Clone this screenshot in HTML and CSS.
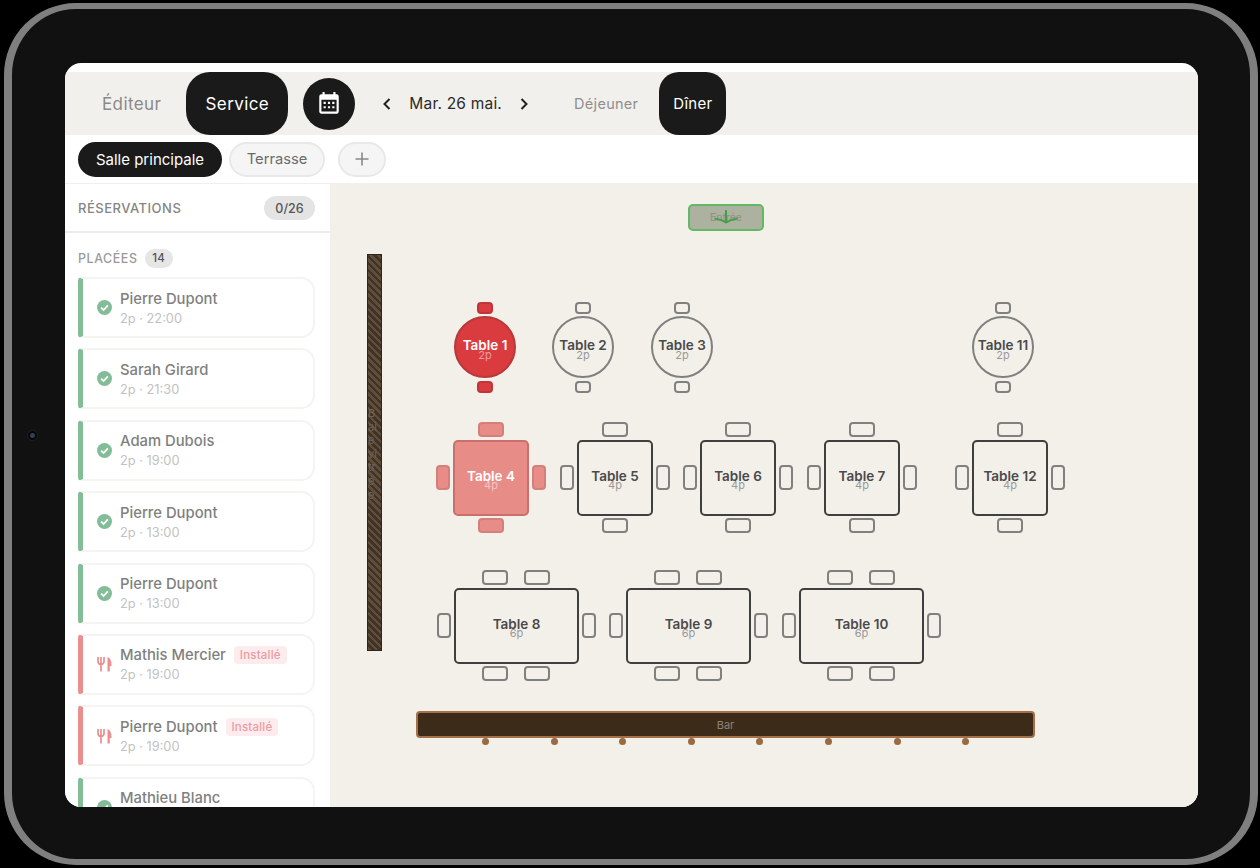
FILE: index.html
```html
<!DOCTYPE html>
<html lang="fr">
<head>
  <meta charset="UTF-8">
  <title>Service - Plan de salle</title>
  <link rel="stylesheet" href="styles.css">
</head>
<body>
  <div class="device">
    <span class="camera"></span>
    <div class="screen">
      <header class="toolbar">
        <div class="mode">Éditeur</div>
        <div class="mode active">Service</div>
        <div class="cal-btn">
          <svg viewBox="0 0 24 24" width="26" height="26"><path fill="#fff" d="M9,10V12H7V10H9M13,10V12H11V10H13M17,10V12H15V10H17M19,3A2,2 0 0,1 21,5V19A2,2 0 0,1 19,21H5C3.89,21 3,20.1 3,19V5A2,2 0 0,1 5,3H6V1H8V3H16V1H18V3H19M19,19V8H5V19H19M9,14V16H7V14H9M13,14V16H11V14H13M17,14V16H15V14H17Z"/></svg>
        </div>
        <div class="date-nav">
          <svg class="chev" viewBox="0 0 10 14" width="10" height="14"><path d="M7.5 2 L2.5 7 L7.5 12"/></svg>
          <span class="date">Mar. 26 mai.</span>
          <svg class="chev" viewBox="0 0 10 14" width="10" height="14"><path d="M2.5 2 L7.5 7 L2.5 12"/></svg>
        </div>
        <div class="meal">Déjeuner</div>
        <div class="meal active">Dîner</div>
      </header>

      <nav class="tabs">
        <div class="tab active">Salle principale</div>
        <div class="tab">Terrasse</div>
        <div class="tab add">
          <svg viewBox="0 0 16 16" width="16" height="16"><path d="M8 1.5V14.5M1.5 8H14.5"/></svg>
        </div>
      </nav>

      <div class="main">
        <aside class="sidebar">
          <div class="side-head">
            <span class="side-title">RÉSERVATIONS</span>
            <span class="count">0/26</span>
          </div>
          <div class="side-body">
            <div class="group-title">PLACÉES <span class="group-count">14</span></div>

            <div class="card placed">
              <svg class="state" viewBox="0 0 16 16" width="15" height="15"><circle cx="8" cy="8" r="8" fill="#82bd97"/><path d="M4.4 8.200 L7 10.700 L11.600 5.800" fill="none" stroke="#fff" stroke-width="2"/></svg>
              <div class="info"><div class="guest">Pierre Dupont</div><div class="when">2p · 22:00</div></div>
            </div>
            <div class="card placed">
              <svg class="state" viewBox="0 0 16 16" width="15" height="15"><circle cx="8" cy="8" r="8" fill="#82bd97"/><path d="M4.4 8.200 L7 10.700 L11.600 5.800" fill="none" stroke="#fff" stroke-width="2"/></svg>
              <div class="info"><div class="guest">Sarah Girard</div><div class="when">2p · 21:30</div></div>
            </div>
            <div class="card placed">
              <svg class="state" viewBox="0 0 16 16" width="15" height="15"><circle cx="8" cy="8" r="8" fill="#82bd97"/><path d="M4.4 8.200 L7 10.700 L11.600 5.800" fill="none" stroke="#fff" stroke-width="2"/></svg>
              <div class="info"><div class="guest">Adam Dubois</div><div class="when">2p · 19:00</div></div>
            </div>
            <div class="card placed">
              <svg class="state" viewBox="0 0 16 16" width="15" height="15"><circle cx="8" cy="8" r="8" fill="#82bd97"/><path d="M4.4 8.200 L7 10.700 L11.600 5.800" fill="none" stroke="#fff" stroke-width="2"/></svg>
              <div class="info"><div class="guest">Pierre Dupont</div><div class="when">2p · 13:00</div></div>
            </div>
            <div class="card placed">
              <svg class="state" viewBox="0 0 16 16" width="15" height="15"><circle cx="8" cy="8" r="8" fill="#82bd97"/><path d="M4.4 8.200 L7 10.700 L11.600 5.800" fill="none" stroke="#fff" stroke-width="2"/></svg>
              <div class="info"><div class="guest">Pierre Dupont</div><div class="when">2p · 13:00</div></div>
            </div>
            <div class="card seated">
              <svg class="state" viewBox="0 0 15 16" width="15" height="16"><path class="fork" d="M1 1V5.500C1 7.200 2.200 8.300 4 8.300S7 7.200 7 5.500V1M4 1V15.500"/><path fill="#ea8f90" d="M10.500 1C13 1.800 14.500 4.200 14.500 8.500V10H12.800V15.500H10.500Z"/></svg>
              <div class="info"><div class="guest">Mathis Mercier <span class="badge">Installé</span></div><div class="when">2p · 19:00</div></div>
            </div>
            <div class="card seated">
              <svg class="state" viewBox="0 0 15 16" width="15" height="16"><path class="fork" d="M1 1V5.500C1 7.200 2.200 8.300 4 8.300S7 7.200 7 5.500V1M4 1V15.500"/><path fill="#ea8f90" d="M10.500 1C13 1.800 14.500 4.200 14.500 8.500V10H12.800V15.500H10.500Z"/></svg>
              <div class="info"><div class="guest">Pierre Dupont <span class="badge">Installé</span></div><div class="when">2p · 19:00</div></div>
            </div>
            <div class="card placed">
              <svg class="state" viewBox="0 0 16 16" width="15" height="15"><circle cx="8" cy="8" r="8" fill="#82bd97"/><path d="M4.4 8.200 L7 10.700 L11.600 5.800" fill="none" stroke="#fff" stroke-width="2"/></svg>
              <div class="info"><div class="guest">Mathieu Blanc</div><div class="when">2p · 20:00</div></div>
            </div>
          </div>
        </aside>

        <section class="floor">
          <div class="entry">
            <span class="entry-label">Entrée</span>
            <svg class="entry-arrow" viewBox="0 0 26 15" width="26" height="15"><path d="M13 1V13M1.500 9.500C6 10 10 11.500 13 13.500C16 11.500 20 10 24.500 9.500"/></svg>
          </div>

          <div class="window">B<br>ai<br>e<br>vi<br>tr<br>é<br>e</div>

          <div class="table round busy t1">
            <i class="chair small c-top"></i><i class="chair small c-bottom"></i>
            <b class="name">Table 1</b><span class="size">2p</span>
          </div>
          <div class="table round t2">
            <i class="chair small c-top"></i><i class="chair small c-bottom"></i>
            <b class="name">Table 2</b><span class="size">2p</span>
          </div>
          <div class="table round t3">
            <i class="chair small c-top"></i><i class="chair small c-bottom"></i>
            <b class="name">Table 3</b><span class="size">2p</span>
          </div>
          <div class="table round t11">
            <i class="chair small c-top"></i><i class="chair small c-bottom"></i>
            <b class="name">Table 11</b><span class="size">2p</span>
          </div>

          <div class="table square soft t4">
            <i class="chair c-top"></i><i class="chair c-bottom"></i><i class="chair side c-left"></i><i class="chair side c-right"></i>
            <b class="name">Table 4</b><span class="size">4p</span>
          </div>
          <div class="table square t5">
            <i class="chair c-top"></i><i class="chair c-bottom"></i><i class="chair side c-left"></i><i class="chair side c-right"></i>
            <b class="name">Table 5</b><span class="size">4p</span>
          </div>
          <div class="table square t6">
            <i class="chair c-top"></i><i class="chair c-bottom"></i><i class="chair side c-left"></i><i class="chair side c-right"></i>
            <b class="name">Table 6</b><span class="size">4p</span>
          </div>
          <div class="table square t7">
            <i class="chair c-top"></i><i class="chair c-bottom"></i><i class="chair side c-left"></i><i class="chair side c-right"></i>
            <b class="name">Table 7</b><span class="size">4p</span>
          </div>
          <div class="table square t12">
            <i class="chair c-top"></i><i class="chair c-bottom"></i><i class="chair side c-left"></i><i class="chair side c-right"></i>
            <b class="name">Table 12</b><span class="size">4p</span>
          </div>

          <div class="table long t8">
            <i class="chair c-top c-a"></i><i class="chair c-top c-b"></i><i class="chair c-bottom c-a"></i><i class="chair c-bottom c-b"></i><i class="chair side c-left"></i><i class="chair side c-right"></i>
            <b class="name">Table 8</b><span class="size">6p</span>
          </div>
          <div class="table long t9">
            <i class="chair c-top c-a"></i><i class="chair c-top c-b"></i><i class="chair c-bottom c-a"></i><i class="chair c-bottom c-b"></i><i class="chair side c-left"></i><i class="chair side c-right"></i>
            <b class="name">Table 9</b><span class="size">6p</span>
          </div>
          <div class="table long t10">
            <i class="chair c-top c-a"></i><i class="chair c-top c-b"></i><i class="chair c-bottom c-a"></i><i class="chair c-bottom c-b"></i><i class="chair side c-left"></i><i class="chair side c-right"></i>
            <b class="name">Table 10</b><span class="size">6p</span>
          </div>

          <div class="bar">Bar</div>
          <div class="stools">
            <i class="stool"></i><i class="stool"></i><i class="stool"></i><i class="stool"></i>
            <i class="stool"></i><i class="stool"></i><i class="stool"></i><i class="stool"></i>
          </div>
        </section>
      </div>
    </div>
  </div>
</body>
</html>
```

FILE: styles.css
```css
* {
  box-sizing: border-box;
}
html, body {
  margin: 0;
  padding: 0;
  height: 100%;
  background: #000;
  overflow: hidden;
}
body {
  font-family: Inter, "Liberation Sans", sans-serif;
  padding: 3px 2px 3px 4px;
}

/* tablet frame */
.device {
  position: relative;
  height: 862px;
  border-style: solid;
  border-width: 6px 8px;
  border-color: #7f7f7f;
  border-radius: 72px;
  background: #111;
  padding: 54px 52px 52px 53px;
}
.camera {
  position: absolute;
  left: 15px;
  top: 421px;
  width: 11px;
  height: 11px;
  border-radius: 50%;
  background: radial-gradient(circle, #33414f 0 2px, #05060a 3px);
  border: 1px solid #1d1f24;
}
.screen {
  height: 100%;
  border-radius: 16px;
  overflow: hidden;
  background: #fff;
  padding-top: 9px;
  display: flex;
  flex-direction: column;
}

/* top bar */
.toolbar {
  height: 63px;
  background: #f2f0ec;
  display: flex;
  align-items: center;
  padding-left: 37px;
  flex-shrink: 0;
}
.mode {
  font-size: 17px;
  color: #8a8a8a;
  letter-spacing: 0.4px;
}
.mode.active {
  height: 63px;
  width: 102px;
  margin-left: 25px;
  border-radius: 24px;
  background: #1a1a1a;
  color: #fff;
  display: flex;
  align-items: center;
  justify-content: center;
}
.cal-btn {
  width: 52px;
  height: 52px;
  margin-left: 15px;
  border-radius: 50%;
  background: #1a1a1a;
  display: flex;
  align-items: center;
  justify-content: center;
}
.date-nav {
  display: flex;
  align-items: center;
  margin-left: 27px;
  gap: 17px;
}
.chev path {
  fill: none;
  stroke: #222;
  stroke-width: 2;
}
.date {
  font-size: 15.5px;
  color: #2b2b2b;
  letter-spacing: 0.2px;
}
.meal {
  font-size: 14.5px;
  color: #8f8f8f;
  margin-left: 45px;
  letter-spacing: 0.3px;
}
.meal.active {
  height: 63px;
  width: 67px;
  margin-left: 21px;
  border-radius: 20px;
  background: #1a1a1a;
  color: #fff;
  font-size: 15px;
  display: flex;
  align-items: center;
  justify-content: center;
}

/* room tabs */
.tabs {
  height: 48px;
  flex-shrink: 0;
  display: flex;
  align-items: center;
  gap: 7px;
  padding: 0 0 0 13px;
}
.tab {
  height: 35px;
  width: 96px;
  border-radius: 18px;
  background: #f5f5f5;
  border: 2px solid #e8e8e8;
  color: #6b6b6b;
  font-size: 14.7px;
  display: flex;
  align-items: center;
  justify-content: center;
}
.tab.active {
  width: 144px;
  background: #1a1a1a;
  border-color: #1a1a1a;
  color: #fff;
  font-size: 15px;
}
.tab.add {
  width: 48px;
  margin-left: 6px;
}
.tab.add path {
  fill: none;
  stroke: #888;
  stroke-width: 1.6;
}

.main {
  flex: 1;
  min-height: 0;
  display: flex;
}

/* reservations */
.sidebar {
  width: 265px;
  flex-shrink: 0;
  background: #fff;
  border-top: 1px solid #efefef;
  overflow: hidden;
}
.side-head {
  height: 49px;
  display: flex;
  align-items: center;
  justify-content: space-between;
  padding: 1px 15px 0 13px;
  border-bottom: 2px solid #ececec;
}
.side-title {
  font-size: 13px;
  font-weight: 500;
  color: #858585;
  letter-spacing: 0.5px;
}
.count {
  width: 51px;
  height: 24px;
  border-radius: 12px;
  background: #e4e4e4;
  color: #555;
  font-size: 12.5px;
  font-weight: 500;
  display: flex;
  align-items: center;
  justify-content: center;
}
.side-body {
  padding: 15px 15px 0 13px;
}
.group-title {
  height: 20px;
  margin-bottom: 9px;
  display: flex;
  align-items: center;
  gap: 7px;
  font-size: 12.4px;
  font-weight: 500;
  color: #9a9a9a;
  letter-spacing: 0.6px;
}
.group-count {
  width: 28px;
  height: 19px;
  border-radius: 10px;
  background: #e6e6e6;
  color: #555;
  font-size: 11.5px;
  display: flex;
  align-items: center;
  justify-content: center;
  letter-spacing: 0;
}
.card {
  height: 61px;
  margin-bottom: 10.4px;
  display: flex;
  align-items: center;
  gap: 8px;
  padding-left: 14px;
  background: #fff;
  border: 2px solid #f6f4f1;
  border-left: 5px solid #82bd97;
  border-radius: 4px 14px 14px 4px;
}
.card.seated {
  border-left-color: #ea8f90;
}
.state {
  flex-shrink: 0;
}
.fork {
  fill: none;
  stroke: #ea8f90;
  stroke-width: 1.7;
}
.info {
  padding-top: 2px;
}
.guest {
  font-size: 14.8px;
  font-weight: 500;
  color: #808080;
  line-height: 20px;
  display: flex;
  align-items: center;
  gap: 8px;
  white-space: nowrap;
}
.when {
  font-size: 12.8px;
  color: #c2c2c2;
  line-height: 20px;
}
.badge {
  height: 18px;
  padding: 0 6px;
  border-radius: 4px;
  background: #fdecee;
  color: #ee9aa0;
  font-size: 11.5px;
  font-weight: 500;
  letter-spacing: 0.2px;
  display: inline-flex;
  align-items: center;
}

/* floor plan, items placed on a free canvas */
.floor {
  flex: 1;
  position: relative;
  background: #f3f0ea;
  overflow: hidden;
}
.entry {
  position: absolute;
  left: 358px;
  top: 21px;
  width: 76px;
  height: 27px;
  border: 2px solid #62b866;
  border-radius: 5px;
  background: #adb1a0;
  display: flex;
  align-items: center;
  justify-content: center;
}
.entry-label {
  font-size: 10.5px;
  color: #8f8f84;
}
.entry-arrow {
  position: absolute;
  left: 23px;
  top: 3px;
}
.entry-arrow path {
  fill: none;
  stroke: #43a047;
  stroke-width: 2;
}
.window {
  position: absolute;
  left: 37px;
  top: 71px;
  width: 15px;
  height: 397px;
  border: 1px solid #2e241a;
  background: repeating-linear-gradient(45deg, #604e3c 0 2.5px, #403224 2.5px 5px);
  color: #6f6557;
  font-size: 11px;
  line-height: 13.6px;
  padding-top: 152px;
}

.table {
  position: absolute;
  display: flex;
  flex-direction: column;
  align-items: center;
  justify-content: center;
  padding-top: 3px;
  border: 2px solid #3f3f3f;
  border-radius: 5px;
  color: #4a4a4a;
}
.name {
  font-size: 13.5px;
  font-weight: 600;
  line-height: 14px;
  white-space: nowrap;
}
.size {
  font-size: 11px;
  line-height: 12px;
  margin-top: -4px;
  color: #999;
}
.chair {
  position: absolute;
  width: 26px;
  height: 15px;
  border: 2px solid #808080;
  border-radius: 4px;
  background: #f3f0ea;
}
.chair.side {
  width: 14px;
  height: 25px;
}
.chair.small {
  width: 16px;
  height: 12px;
}
.round {
  width: 62px;
  height: 62px;
  border: 2px solid #808080;
  border-radius: 50%;
  top: 133px;
  padding-top: 5px;
}
.round .size {
  margin-top: -3px;
}
.square {
  width: 76px;
  height: 76px;
  top: 257px;
}
.long {
  width: 125px;
  height: 76px;
  top: 405px;
}
.c-top {
  top: -20px;
  left: 50%;
  margin-left: -13px;
}
.c-bottom {
  bottom: -19px;
  left: 50%;
  margin-left: -13px;
}
.small.c-top {
  top: -16px;
  margin-left: -8px;
}
.small.c-bottom {
  bottom: -17px;
  margin-left: -8px;
}
.c-left {
  left: -19px;
  top: 23px;
}
.c-right {
  right: -19px;
  top: 23px;
}
.long .c-a {
  left: 26px;
  margin-left: 0;
}
.long .c-b {
  left: 68px;
  margin-left: 0;
}

.busy {
  background: #da3b3f;
  border-color: #b8393a;
  color: #fff;
}
.busy .chair {
  background: #da3b3f;
  border-color: #c13538;
}
.busy .size, .soft .size {
  color: rgba(255, 255, 255, 0.5);
}
.soft {
  background: #e88c88;
  border-color: #c96f6c;
  color: #fff;
}
.soft .chair {
  background: #e88c88;
  border-color: #d47f7c;
}

.t1 { left: 124px; }
.t2 { left: 222px; }
.t3 { left: 321px; }
.t11 { left: 642px; }
.t4 { left: 123px; }
.t5 { left: 247px; }
.t6 { left: 370px; }
.t7 { left: 494px; }
.t12 { left: 642px; }
.t8 { left: 124px; }
.t9 { left: 296px; }
.t10 { left: 469px; }

.bar {
  position: absolute;
  left: 86px;
  top: 528px;
  width: 619px;
  height: 27px;
  border: 2px solid #a3704a;
  border-radius: 4px;
  background: #3d2b1a;
  color: #8d8378;
  font-size: 11px;
  display: flex;
  align-items: center;
  justify-content: center;
}
.stools {
  position: absolute;
  left: 152px;
  top: 555px;
  display: flex;
  gap: 61.6px;
}
.stool {
  width: 7px;
  height: 7px;
  border-radius: 50%;
  background: #9a6a42;
}
```
